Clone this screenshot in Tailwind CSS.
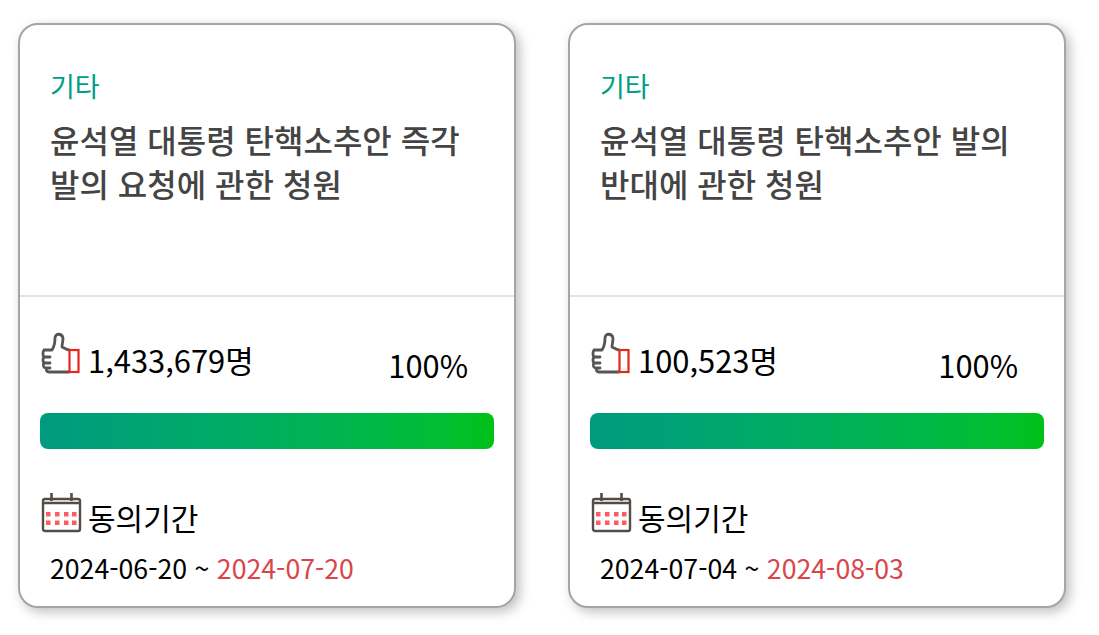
<!DOCTYPE html>
<html lang="ko">
<head>
  <meta charset="UTF-8" />
  <title>청원</title>
  <script src="https://cdn.jsdelivr.net/npm/@tailwindcss/browser@4"></script>
</head>
<body class="bg-white font-['Noto_Sans_CJK_KR','Noto_Sans',sans-serif]">
  <div class="flex gap-[52px] pl-[18px] pt-[23px] pb-[27px]">

    <!-- card 1 -->
    <div class="w-[498px] h-[585px] shrink-0 rounded-[20px] border-2 border-[#a5a5a5] bg-white shadow-[4px_4px_12px_rgba(0,0,0,0.25)]">
      <div class="h-[272px] px-[30px] pt-[42px] border-b-2 border-[#e2e2e2]">
        <p class="text-[27px] leading-[38px] text-[#009e85]">기타</p>
        <p class="mt-[12px] text-[32px] leading-[44px] font-medium text-[#444]">윤석열 대통령 탄핵소추안 즉각 발의 요청에 관한 청원</p>
      </div>
      <div class="px-[20px] pt-[35px]">
        <div class="flex h-[46px]">
          <svg class="w-[42px] h-[46px] shrink-0" viewBox="0 0 42 46" fill="none">
            <path d="M4 18H12C14 15 15 11 15 6C15 1 22 1 23 6C23 10 22 12 22 15C24 16 27 18 29 18M11 18H5Q3 18 3 21.500Q3 25 5 25H10M5 25Q3 25 3 28Q3 31 5 31H10M5 31Q3 31 3.500 34Q4 36 6 36H10M6 36Q6 40 9 40H29" stroke="#555" stroke-width="2.800" stroke-linejoin="round" stroke-linecap="round" />
            <rect x="29.500" y="18" width="9" height="22" stroke="#e8261c" stroke-width="2.200" fill="#fff" />
          </svg>
          <span class="ml-[6px] text-[30.900px] leading-[40px] text-black mt-[8px]">1,433,679명</span>
          <span class="ml-auto mr-[26px] mt-[13px] text-[30.800px] leading-[40px] text-black">100%</span>
        </div>
        <div class="mt-[35px] h-[36px] rounded-[8px] bg-gradient-to-r from-[#009a80] to-[#00c214]"></div>
        <div class="mt-[42px] flex h-[48px]">
          <svg class="w-[42px] h-[44px] shrink-0" viewBox="0 0 42 44" fill="none">
            <rect x="3" y="8" width="37" height="32" rx="2" stroke="#544c46" stroke-width="2.400" fill="#fff" />
            <path d="M3 12H40M11.500 2V10M31.500 2V10" stroke="#544c46" stroke-width="2.600" />
            <path d="M6 21h4.500v4.500h-4.500zM15 21h4.500v4.500h-4.500zM24 21h4.500v4.500h-4.500zM32 21h4.500v4.500h-4.500zM6 29.500h4.500v4.500h-4.500zM15 29.500h4.500v4.500h-4.500zM24 29.500h4.500v4.500h-4.500zM32 29.500h4.500v4.500h-4.500z" fill="#ff5a5f" />
          </svg>
          <span class="ml-[6px] text-[30px] leading-[40px] text-black mt-[6px]">동의기간</span>
        </div>
        <p class="mt-[10px] pl-[10px] text-[26.700px] leading-[38px] text-black">2024-06-20 ~ <span class="text-[#d9454a]">2024-07-20</span></p>
      </div>
    </div>

    <!-- card 2 -->
    <div class="w-[498px] h-[585px] shrink-0 rounded-[20px] border-2 border-[#a5a5a5] bg-white shadow-[4px_4px_12px_rgba(0,0,0,0.25)]">
      <div class="h-[272px] px-[30px] pt-[42px] border-b-2 border-[#e2e2e2]">
        <p class="text-[27px] leading-[38px] text-[#009e85]">기타</p>
        <p class="mt-[12px] text-[32px] leading-[44px] font-medium text-[#444]">윤석열 대통령 탄핵소추안 발의 반대에 관한 청원</p>
      </div>
      <div class="px-[20px] pt-[35px]">
        <div class="flex h-[46px]">
          <svg class="w-[42px] h-[46px] shrink-0" viewBox="0 0 42 46" fill="none">
            <path d="M4 18H12C14 15 15 11 15 6C15 1 22 1 23 6C23 10 22 12 22 15C24 16 27 18 29 18M11 18H5Q3 18 3 21.500Q3 25 5 25H10M5 25Q3 25 3 28Q3 31 5 31H10M5 31Q3 31 3.500 34Q4 36 6 36H10M6 36Q6 40 9 40H29" stroke="#555" stroke-width="2.800" stroke-linejoin="round" stroke-linecap="round" />
            <rect x="29.500" y="18" width="9" height="22" stroke="#e8261c" stroke-width="2.200" fill="#fff" />
          </svg>
          <span class="ml-[6px] text-[30.900px] leading-[40px] text-black mt-[8px]">100,523명</span>
          <span class="ml-auto mr-[26px] mt-[13px] text-[30.800px] leading-[40px] text-black">100%</span>
        </div>
        <div class="mt-[35px] h-[36px] rounded-[8px] bg-gradient-to-r from-[#009a80] to-[#00c214]"></div>
        <div class="mt-[42px] flex h-[48px]">
          <svg class="w-[42px] h-[44px] shrink-0" viewBox="0 0 42 44" fill="none">
            <rect x="3" y="8" width="37" height="32" rx="2" stroke="#544c46" stroke-width="2.400" fill="#fff" />
            <path d="M3 12H40M11.500 2V10M31.500 2V10" stroke="#544c46" stroke-width="2.600" />
            <path d="M6 21h4.500v4.500h-4.500zM15 21h4.500v4.500h-4.500zM24 21h4.500v4.500h-4.500zM32 21h4.500v4.500h-4.500zM6 29.500h4.500v4.500h-4.500zM15 29.500h4.500v4.500h-4.500zM24 29.500h4.500v4.500h-4.500zM32 29.500h4.500v4.500h-4.500z" fill="#ff5a5f" />
          </svg>
          <span class="ml-[6px] text-[30px] leading-[40px] text-black mt-[6px]">동의기간</span>
        </div>
        <p class="mt-[10px] pl-[10px] text-[26.700px] leading-[38px] text-black">2024-07-04 ~ <span class="text-[#d9454a]">2024-08-03</span></p>
      </div>
    </div>

  </div>
</body>
</html>
